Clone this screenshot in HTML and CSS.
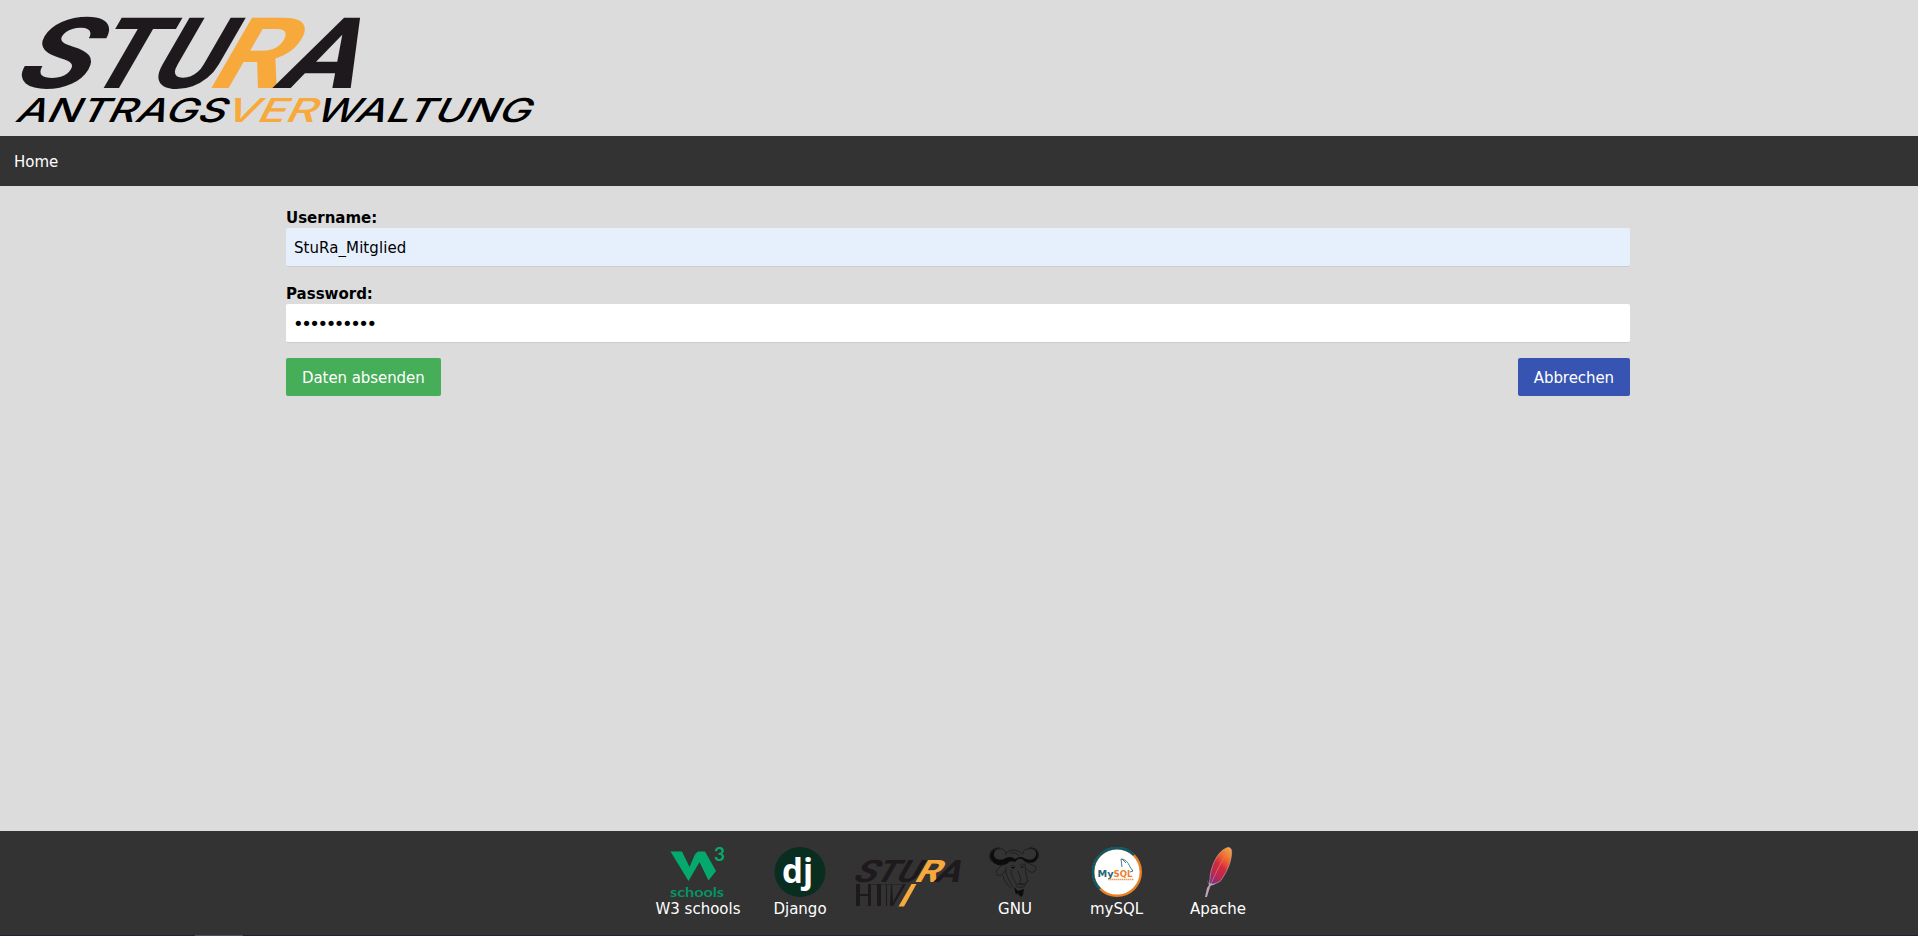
FILE: index.html
```
<!DOCTYPE html>
<html lang="de">
<head>
<meta charset="utf-8">
<title>StuRa Antragsverwaltung</title>
<link rel="stylesheet" href="styles.css">
</head>
<body>
<header class="header">
  <svg class="logo" width="560" height="136" viewBox="0 0 560 136" role="img" aria-label="StuRa Antragsverwaltung">
    <g class="logo-main" transform="translate(0 88) skewX(-30)">
      <text x="8" y="0" textLength="74" lengthAdjust="spacingAndGlyphs">S</text>
      <text x="79" y="0" textLength="65" lengthAdjust="spacingAndGlyphs">T</text>
      <text x="143" y="0" textLength="68" lengthAdjust="spacingAndGlyphs">U</text>
      <text class="accent" x="204" y="0" textLength="75" lengthAdjust="spacingAndGlyphs">R</text>
      <text x="272" y="0" textLength="79" lengthAdjust="spacingAndGlyphs">A</text>
    </g>
    <g class="logo-sub" transform="translate(0 122) skewX(-27)">
      <text x="14" y="0" textLength="209" lengthAdjust="spacingAndGlyphs">ANTRAGS</text>
      <text class="accent" x="222" y="0" textLength="92" lengthAdjust="spacingAndGlyphs">VER</text>
      <text x="313" y="0" textLength="215" lengthAdjust="spacingAndGlyphs">WALTUNG</text>
    </g>
  </svg>
</header>
<nav class="nav"><a href="#">Home</a></nav>
<main class="content">
  <form class="form">
    <label class="label" for="user">Username:</label>
    <input class="input filled" id="user" type="text" value="StuRa_Mitglied">
    <label class="label" for="pass">Password:</label>
    <input class="input secret" id="pass" type="password" value="abcdefghij">
    <div class="actions">
      <button class="button green" type="button">Daten absenden</button>
      <button class="button blue" type="button">Abbrechen</button>
    </div>
  </form>
</main>
<footer class="footer">
  <a class="link w3">
    <svg width="56" height="50" viewBox="0 0 56 50">
      <path fill="#04aa6d" d="M.500 4.500H12L19.500 20L24 9.500Q25.500 6 28 4.500H35L46 24L38.500 33.500L29.500 15L18.500 34Z"/>
      <text class="w3-three" x="44" y="14">3</text>
      <text class="w3-name" x="0" y="49.500" textLength="54" lengthAdjust="spacingAndGlyphs">schools</text>
    </svg>
    <span>W3 schools</span>
  </a>
  <a class="link dj">
    <svg width="52" height="50" viewBox="0 0 52 50">
      <ellipse cx="26" cy="25" rx="25.500" ry="25" fill="#092e20"/>
      <text class="dj-name" x="8" y="36" textLength="31" lengthAdjust="spacingAndGlyphs">dj</text>
    </svg>
    <span>Django</span>
  </a>
  <a class="link stura">
    <svg width="108" height="50" viewBox="0 0 108 50">
      <g class="mini" transform="translate(0 35) skewX(-30)">
        <text x="-2" y="0" textLength="23" lengthAdjust="spacingAndGlyphs">S</text>
        <text x="20" y="0" textLength="21" lengthAdjust="spacingAndGlyphs">T</text>
        <text x="41" y="0" textLength="22" lengthAdjust="spacingAndGlyphs">U</text>
        <text class="accent" x="60" y="0" textLength="24" lengthAdjust="spacingAndGlyphs">R</text>
        <text x="80" y="0" textLength="25" lengthAdjust="spacingAndGlyphs">A</text>
      </g>
      <g fill="#1d191c">
        <path d="M3 37h4v22h-4zM15 37h3v22h-3zM7 47h8v2h-8zM24 37h4v22h-4zM33 37h1v22h-1zM38 37l-1 22h3l13-22h-3L40 55l-1-18z"/>
        <path d="M15 37h35v1h-35z" opacity=".5"/>
      </g>
      <path fill="#f7a93b" d="M58.500 37h5L51 59.500h-5.500z"/>
    </svg>
  </a>
  <a class="link gnu">
    <svg width="52" height="50" viewBox="0 0 52 50" fill="none" stroke="#1a1a1a" stroke-linecap="round" stroke-linejoin="round">
      <path fill="#0c0c0c" stroke="none" d="M10 1C1 2-1 9 3 14c4 5 11 6 16 2 2-2 4-2 7-1 3-4 7-4 9-1 6 4 13 1 14-4 1-5-2-9-8-9 5 1 7 4 6 7-1 5-7 6-12 3-3-2-6-1-9 1-4-3-8-2-11 0-5 2-9 0-10-3-1-3 1-6 5-8z"/>
      <path stroke-width="1.500" d="M10 1C1 2-1 9 3 14M41 1c6 0 9 4 8 9"/>
      <g stroke-width=".8">
        <path d="M9 2c6-1 8 2 8 6M41 2c-5-1-7 2-7 5M17 6c4-4 11-4 15 0M21 6c3-1 7 0 9 3M14 17L7 24c0 4 2 5 6 4l4-5M37 15l10 5c0 4-2 6-6 5l-3-3M17 20c-1 8 3 13 7 20M14 29c1 5 4 9 8 12M36 17l1 10 2 7-3 4-9-1M22 19c2-1 3-1 4 1M31 18c2-2 3-1 4 0M29 24l3 9-2 3 5 1 4-3M27 39c3 2 7 2 9 0M22 23c0 6 2 9 5 13"/>
      </g>
      <path fill="#0c0c0c" stroke="none" d="M25 40l4 4 6-2-1 6-2 2-4-4-1 2zM22 20l4 0-2 2zM31 20l4-1-2 2z"/>
    </svg>
    <span>GNU</span>
  </a>
  <a class="link mysql">
    <svg width="50" height="50" viewBox="0 0 50 50">
      <circle cx="25" cy="25" r="23.800" fill="#fff" stroke="#e98021" stroke-width="2.400"/>
      <path d="M8 42A23.800 23.800 0 0 1 42 8" fill="none" stroke="#075b70" stroke-width="2.400"/>
      <g class="mysql-name"><text class="my" x="5.500" y="29.500" textLength="16" lengthAdjust="spacingAndGlyphs">My</text><text class="sql" x="21.500" y="29.500" textLength="19" lengthAdjust="spacingAndGlyphs">SQL</text></g>
      <path d="M30 20l-1-8c4 0 7 3 9 8l3 4-3 1M30 12l4 4" fill="none" stroke="#4e7a8d" stroke-width="1"/>
      <path d="M16 32.500h26" stroke="#ee9c58" stroke-width="1.500" stroke-dasharray="1.500 .500"/>
    </svg>
    <span>mySQL</span>
  </a>
  <a class="link apache">
    <svg width="30" height="50" viewBox="0 0 30 50">
      <defs><linearGradient id="feather" x1=".8" y1="0" x2=".2" y2="1"><stop offset="0" stop-color="#f6a03a"/><stop offset=".28" stop-color="#eb642d"/><stop offset=".5" stop-color="#d22a3f"/><stop offset=".75" stop-color="#bb2752"/><stop offset="1" stop-color="#75308a"/></linearGradient></defs>
      <path fill="url(#feather)" stroke="#d9a4ad" stroke-width=".6" d="M25 .5c3 0 4 2 3.500 7-.6 9-6 20-11.500 27l-7 3-4-1 1-4C7 22 14 3 25 .5z"/>
      <path d="M26 3C19 13 13 25 7.500 38L3 50" fill="none" stroke="#ea7b70" stroke-width=".7"/>
      <path d="M4 32l2 6-2 3-2 9h2l3-11 3-1 4-2-5 1-4-1-1-4z" fill="#b7a6be"/>
    </svg>
    <span>Apache</span>
  </a>
</footer>
<div class="edge"><span></span></div>
</body>
</html>
```
FILE: styles.css
```
* { box-sizing: border-box; }
body {
  margin: 0;
  height: 936px;
  display: flex;
  flex-direction: column;
  overflow: hidden;
  background: #dcdcdc;
  color: #000;
  font: 15px/22.5px Verdana, "DejaVu Sans", sans-serif;
}
.header { height: 136px; }
.logo { display: block; overflow: visible; }
.logo-main { font: 700 99px Roboto, sans-serif; fill: #1d191c; }
.logo-sub { font: 500 33px Inter, sans-serif; fill: #000; }
.logo-main .accent, .logo-sub .accent, .mini .accent { fill: #f7a93b; }
.nav {
  height: 50px;
  padding: 15px 14px 12px;
  background: #333;
}
.nav a { display: block; color: #fff; text-decoration: none; }
.content { flex: 1; padding: 20px 288px 0 286px; }
.form { display: flex; flex-direction: column; }
.label { height: 22px; padding-top: 1px; font-weight: 700; line-height: 22px; }
.input {
  height: 39px;
  margin-bottom: 15px;
  padding: 9px 8px 7px;
  border: 0;
  border-bottom: 1px solid #ccc;
  border-radius: 2px;
  background: #fff;
  color: #000;
  font: inherit;
  letter-spacing: .07px;
  outline: 0;
}
.secret { padding: 8px 7px; font-size: 18px; letter-spacing: -2.45px; }
.filled { background: #e6f0fd; }
.actions { display: flex; justify-content: space-between; }
.button {
  height: 38px;
  padding: 2px 16px 0;
  border: 0;
  border-radius: 2px;
  color: #fff;
  font: inherit;
  letter-spacing: -.07px;
}
.green { background: #46ad58; }
.blue { background: #3854b3; }
.footer {
  height: 104px;
  padding: 16px 0 0 639px;
  display: flex;
  align-items: flex-start;
  background: #333;
  color: #fff;
}
.link { display: flex; flex-direction: column; align-items: center; }
.link svg { display: block; overflow: visible; margin-bottom: 1px; }
.w3 { width: 118px; }
.dj { width: 86px; }
.stura { width: 128px; }
.gnu { width: 88px; }
.mysql { width: 115px; }
.apache { width: 88px; }
.w3-three { font: 700 19px Lato, sans-serif; fill: #04aa6d; }
.w3-name { font: 700 14px Lato, sans-serif; fill: #049562; }
.dj-name { font: 700 34px "Open Sans", sans-serif; fill: #fff; }
.mini { font: 700 31px Roboto, sans-serif; fill: #1d191c; }
.mysql-name { font: 700 9.5px "DejaVu Sans", sans-serif; }
.my { fill: #28647a; }
.sql { fill: #ee8033; }
.edge { height: 1px; padding-left: 195px; background: #221f36; }
.edge span { display: block; width: 48px; height: 1px; background: #55466f; }
```
